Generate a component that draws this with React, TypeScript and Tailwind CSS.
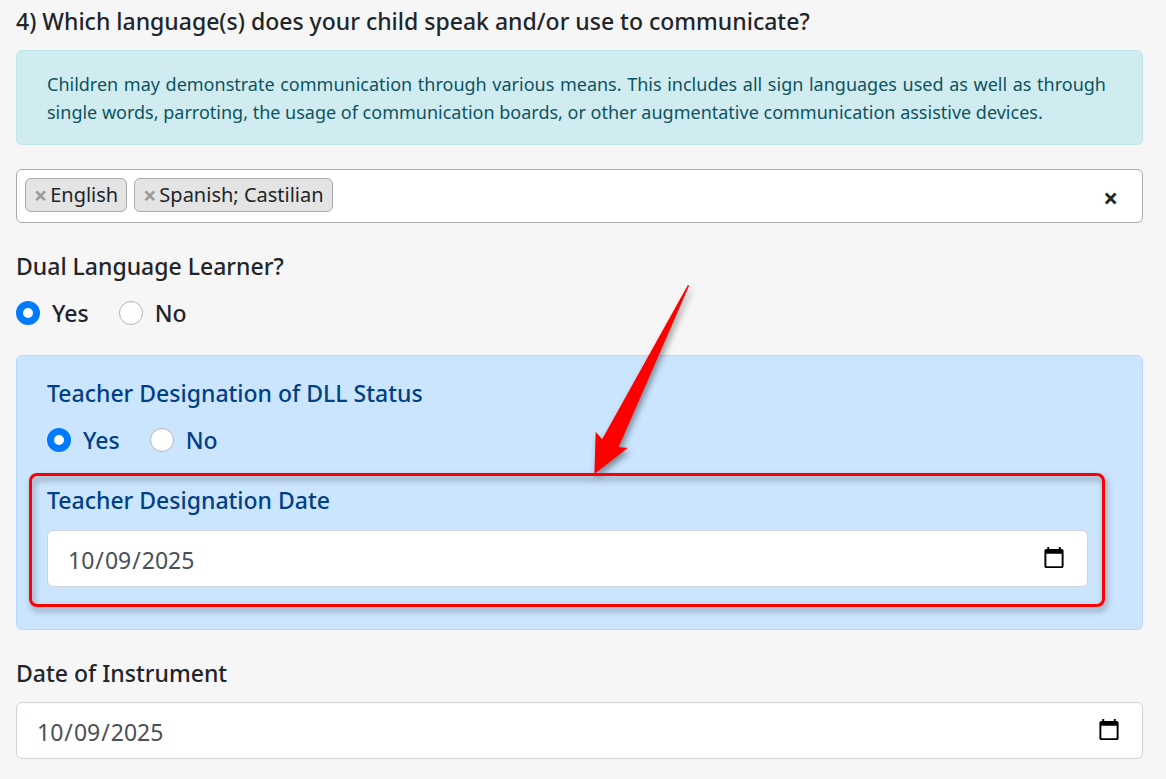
import { useState } from 'react';

const DATE_INPUT_CLASS =
  'block h-[57px] w-full rounded-md border border-[#ced4da] bg-white pl-[19px] pr-[21px] pt-[2px] text-[23px] leading-8 text-[#495057] [&::-webkit-calendar-picker-indicator]:h-6 [&::-webkit-calendar-picker-indicator]:w-6 [&::-webkit-calendar-picker-indicator]:p-0 [&::-webkit-calendar-picker-indicator]:mb-1';

type YesNoProps = {
  name: string;
  legend: string;
  value: string;
  onChange: (value: string) => void;
};

function YesNo({ name, legend, value, onChange }: YesNoProps) {
  return (
    <fieldset>
      <legend className="mb-3 text-[23px] font-medium leading-[34px]">{legend}</legend>
      <div className="flex gap-[30px]">
        {['Yes', 'No'].map((option) => (
          <label key={option} className="flex items-start gap-3 text-[23px] font-medium leading-9">
            <input
              type="radio"
              name={name}
              value={option}
              checked={value === option}
              onChange={() => onChange(option)}
              className="mt-[6px] h-6 w-6 appearance-none rounded-full border border-[#adb5bd] bg-white checked:border-[7px] checked:border-[#007bff]"
            />
            {option}
          </label>
        ))}
      </div>
    </fieldset>
  );
}

export default function App() {
  const [languages, setLanguages] = useState(['English', 'Spanish; Castilian']);
  const [dualLearner, setDualLearner] = useState('Yes');
  const [teacherStatus, setTeacherStatus] = useState('Yes');
  const [designationDate, setDesignationDate] = useState('2025-10-09');
  const [instrumentDate, setInstrumentDate] = useState('2025-10-09');

  const removeLanguage = (language: string) => {
    setLanguages((prev) => prev.filter((item) => item !== language));
  };

  return (
    <main className="min-h-screen bg-[#f6f6f6] pb-5 pl-4 pr-[23px] pt-1 font-['Noto_Sans',sans-serif] text-[#212529]">
      {/* Languages */}
      <h2 id="languages" className="mb-3 text-[23px] font-medium leading-[34px]">
        4) Which language(s) does your child speak and/or use to communicate?
      </h2>

      <div className="mb-6 rounded-md border border-[#bee5eb] bg-[#d1ecf1] pb-[18px] pl-[30px] pr-9 pt-[19px] text-justify text-[18px] leading-7 text-[#0c5460]">
        Children may demonstrate communication through various means. This includes all sign languages used as well as
        through single words, parroting, the usage of communication boards, or other augmentative communication
        assistive devices.
      </div>

      <div
        role="group"
        aria-labelledby="languages"
        className="mb-[26px] flex min-h-[54px] items-start justify-between rounded-md border border-[#aaa] bg-white py-2 pl-2 pr-6"
      >
        <ul className="flex flex-wrap gap-[7px]">
          {languages.map((language) => (
            <li
              key={language}
              className="flex h-[34px] items-center gap-[3px] rounded-md border border-[#aaa] bg-[#e4e4e4] pl-2 pr-2 text-[20px] leading-8"
            >
              <button
                type="button"
                aria-label={`Remove ${language}`}
                onClick={() => removeLanguage(language)}
                className="text-[23px] font-bold leading-8 text-[#999]"
              >
                ×
              </button>
              {language}
            </li>
          ))}
        </ul>
        <button
          type="button"
          aria-label="Remove all languages"
          onClick={() => setLanguages([])}
          className="pt-1 text-[26px] font-bold leading-8"
        >
          ×
        </button>
      </div>

      <YesNo name="dualLearner" legend="Dual Language Learner?" value={dualLearner} onChange={setDualLearner} />

      {/* Teacher designation */}
      <section className="mb-[26px] mt-6 rounded-md border border-[#b8daff] bg-[#cce5ff] pb-[42px] pl-[30px] pr-[54px] pt-5 text-[#004085]">
        <YesNo
          name="teacherStatus"
          legend="Teacher Designation of DLL Status"
          value={teacherStatus}
          onChange={setTeacherStatus}
        />

        <div className="relative mt-[25px]">
          <label htmlFor="designationDate" className="mb-[13px] block text-[23px] font-medium leading-[34px]">
            Teacher Designation Date
          </label>
          <input
            type="date"
            id="designationDate"
            value={designationDate}
            onChange={(e) => setDesignationDate(e.target.value)}
            className={DATE_INPUT_CLASS}
          />

          {/* Callout frame and arrow */}
          <div className="pointer-events-none absolute -bottom-5 -left-[18px] -right-[17px] -top-[10px] rounded-lg border-[3px] border-[#f00] drop-shadow-[2px_4px_3px_rgba(0,0,0,0.4)]">
            <svg
              viewBox="0 0 100 190"
              className="absolute bottom-full left-[52%] h-[190px] w-[100px] overflow-visible"
              aria-hidden="true"
            >
              <path d="M6.400 188 L7.700 145.700 L14.100 153.300 L99.900 -1 L101.200 -0.500 L30.700 161 L39.700 162 Z" fill="#f00" />
            </svg>
          </div>
        </div>
      </section>

      {/* Instrument date */}
      <label htmlFor="instrumentDate" className="mb-3 block text-[23px] font-medium leading-[34px]">
        Date of Instrument
      </label>
      <input
        type="date"
        id="instrumentDate"
        value={instrumentDate}
        onChange={(e) => setInstrumentDate(e.target.value)}
        className={DATE_INPUT_CLASS}
      />
    </main>
  );
}
